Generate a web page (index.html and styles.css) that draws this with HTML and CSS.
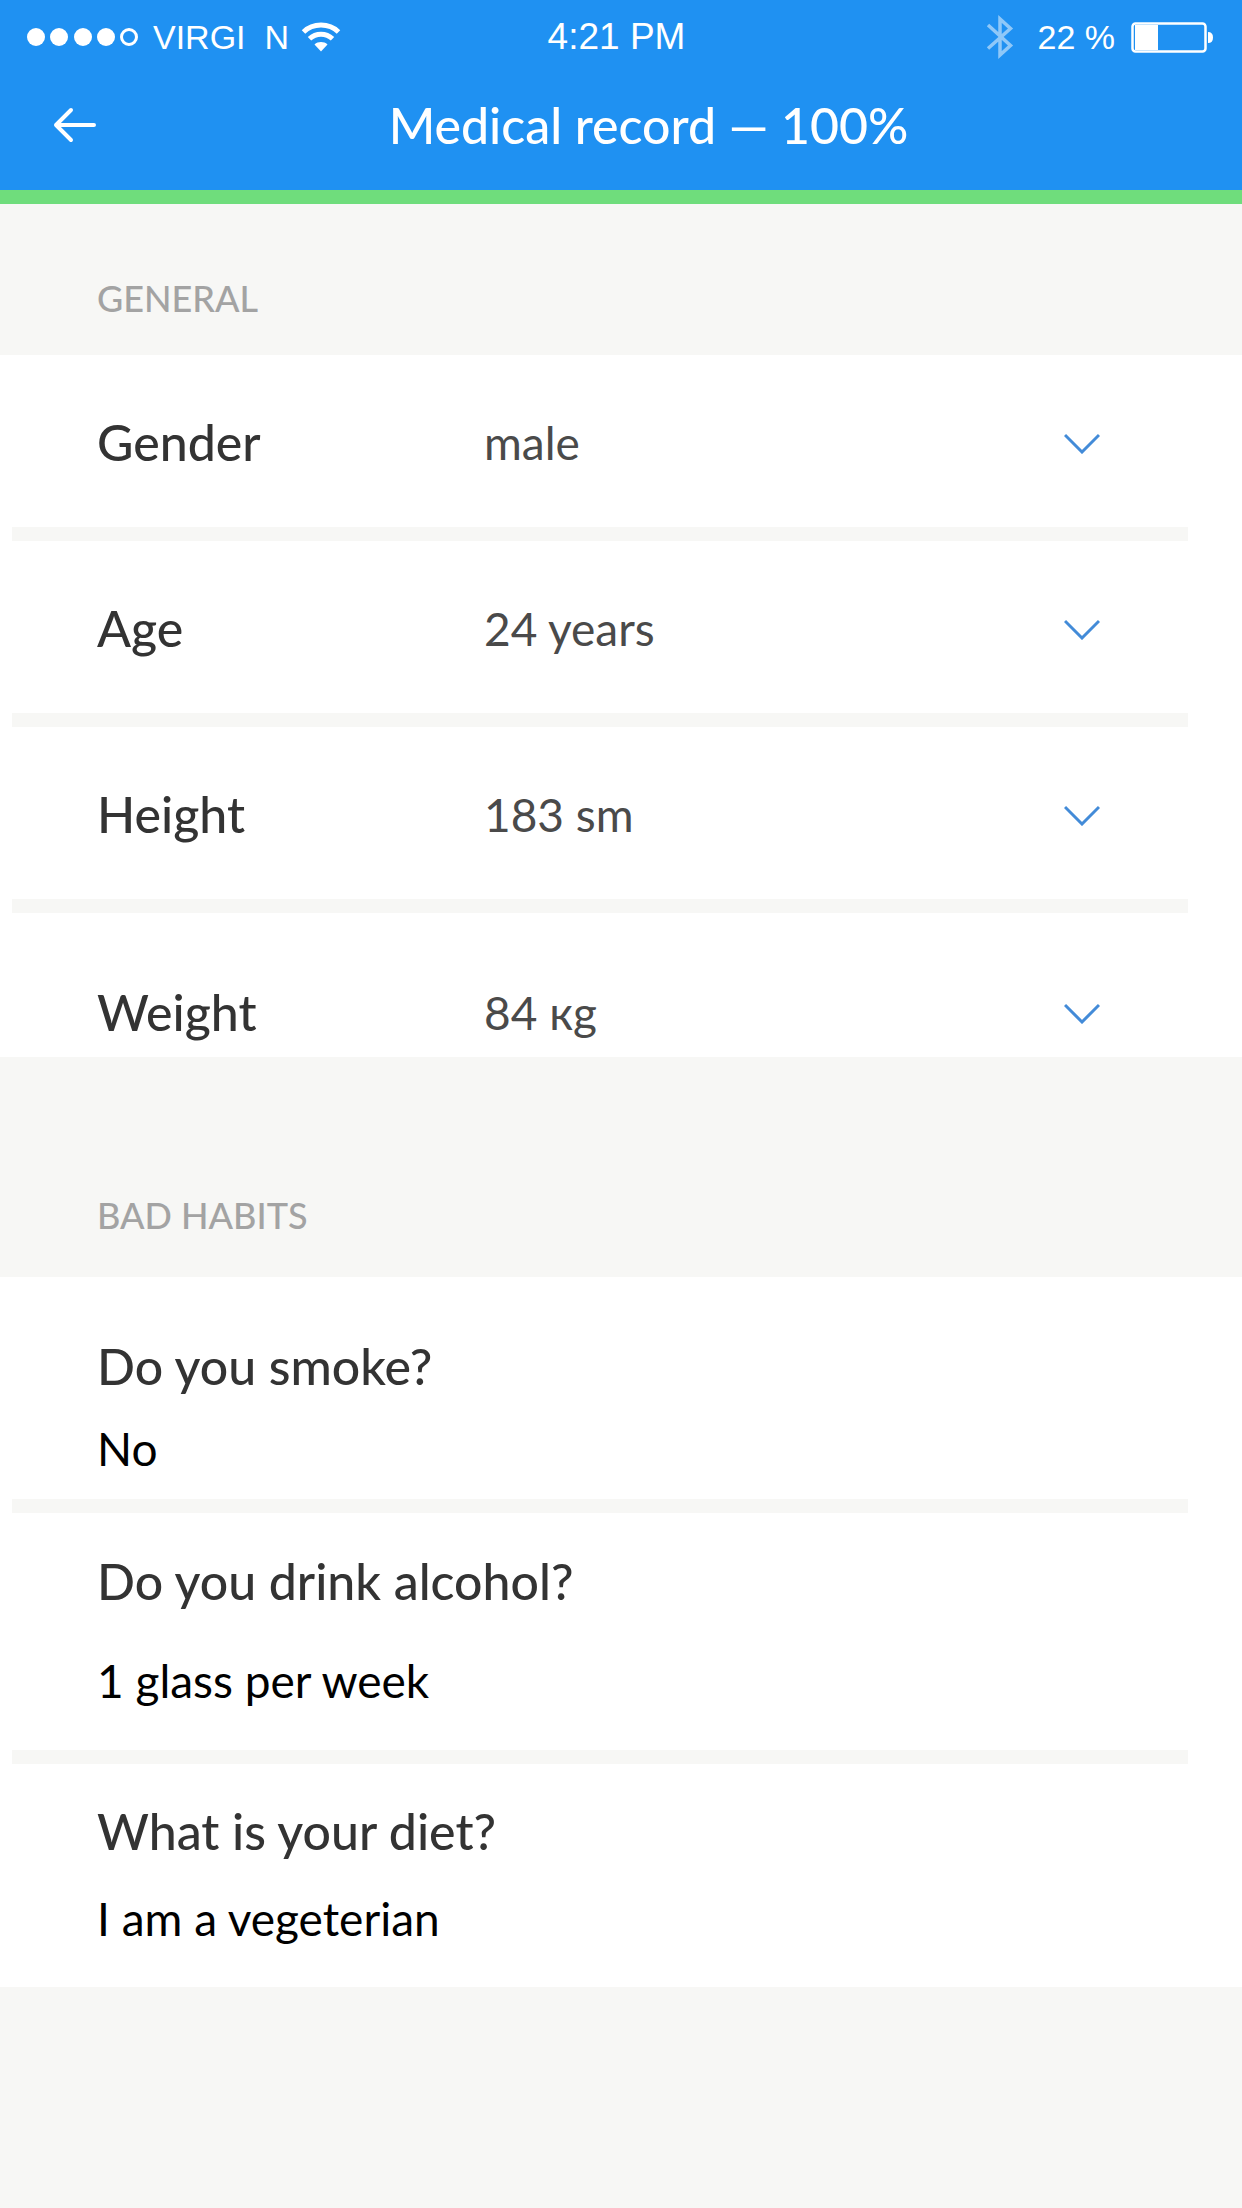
FILE: index.html
```html
<!DOCTYPE html>
<html lang="en">
<head>
  <meta charset="UTF-8">
  <meta name="viewport" content="width=device-width, initial-scale=1.0">
  <title>Medical record</title>
  <link rel="stylesheet" href="styles.css">
</head>
<body>
  <header class="header">
    <!-- Status Bar -->
    <div class="status-bar">
      <div class="status-left">
        <svg class="signal" width="112" height="18" viewBox="0 0 112 18">
          <g fill="#fff">
            <circle cx="9" cy="9" r="9"/>
            <circle cx="32" cy="9" r="9"/>
            <circle cx="56" cy="9" r="9"/>
            <circle cx="79" cy="9" r="9"/>
          </g>
          <circle cx="102" cy="9" r="7.500" fill="none" stroke="#fff" stroke-width="3"/>
        </svg>
        <span class="carrier">VIRGI&nbsp; N</span>
        <svg class="wifi" width="40" height="30" viewBox="0 0 40 30">
          <g fill="none" stroke="#fff" stroke-width="5">
            <path d="M2.500 10 C12 0.800 28 0.800 37.500 10"/>
            <path d="M8.500 16.700 C15 10.600 25 10.600 31.500 16.700"/>
          </g>
          <path d="M13.500 22.500 C17 19.300 23 19.300 26.500 22.500 L20 29.500 Z" fill="#fff"/>
        </svg>
      </div>
      <span class="time">4:21 PM</span>
      <div class="status-right">
        <svg class="bluetooth" width="28" height="44" viewBox="0 0 28 44">
          <path d="M2 10 L24.500 30.500 L14 40 V4 L24.500 13.500 L2 33.500" fill="none" stroke="#fff" stroke-width="3.500"/>
        </svg>
        <span class="percent">22 %</span>
        <svg class="battery" width="83" height="31" viewBox="0 0 83 31">
          <rect x="1.500" y="1.500" width="73" height="28" rx="3" fill="none" stroke="#fff" stroke-width="2.500"/>
          <rect x="4" y="3" width="23" height="25" fill="#fff"/>
          <path d="M77 10 Q82 10 82 15.500 Q82 21 77 21 Z" fill="#fff"/>
        </svg>
      </div>
    </div>

    <div class="nav-bar">
      <button class="back-button" aria-label="Back">
        <svg width="44" height="36" viewBox="0 0 44 36">
          <path d="M18 3 L3 18 L18 33 M3 18 H41" fill="none" stroke="#fff" stroke-width="4" stroke-linecap="round" stroke-linejoin="round"/>
        </svg>
      </button>
      <h1>Medical record — 100%</h1>
    </div>
  </header>

  <main>
    <h2 class="section-title">General</h2>
    <form class="card">
      <div class="row">
        <label for="gender">Gender</label>
        <select id="gender">
          <option>male</option>
          <option>female</option>
        </select>
        <svg class="chevron" width="36" height="24" viewBox="0 0 36 24"><path d="M1 5 L18 22 L35 5"/></svg>
      </div>
      <div class="row">
        <label for="age">Age</label>
        <select id="age">
          <option>24 years</option>
          <option>25 years</option>
        </select>
        <svg class="chevron" width="36" height="24" viewBox="0 0 36 24"><path d="M1 5 L18 22 L35 5"/></svg>
      </div>
      <div class="row">
        <label for="height">Height</label>
        <select id="height">
          <option>183 sm</option>
          <option>184 sm</option>
        </select>
        <svg class="chevron" width="36" height="24" viewBox="0 0 36 24"><path d="M1 5 L18 22 L35 5"/></svg>
      </div>
      <div class="row row-last">
        <label for="weight">Weight</label>
        <select id="weight">
          <option>84 кg</option>
          <option>85 кg</option>
        </select>
        <svg class="chevron" width="36" height="24" viewBox="0 0 36 24"><path d="M1 5 L18 22 L35 5"/></svg>
      </div>
    </form>

    <h2 class="section-title section-habits">Bad habits</h2>
    <div class="card">
      <div class="question smoke">
        <h3>Do you smoke?</h3>
        <p>No</p>
      </div>
      <div class="question alcohol">
        <h3>Do you drink alcohol?</h3>
        <p>1 glass per week</p>
      </div>
      <div class="question diet">
        <h3>What is your diet?</h3>
        <p>I am a vegeterian</p>
      </div>
    </div>
  </main>
</body>
</html>
```
FILE: styles.css
```css
* {
  box-sizing: border-box;
}

body {
  font-family: Lato, 'Noto Sans', sans-serif;
  margin: 0;
  background-color: #f7f7f5;
  color: #333;
}

h1, h2, h3, p {
  margin: 0;
  font-weight: 500;
}

.header {
  background-color: #1f91f2;
  border-bottom: 14px solid #6fdd7c;
  color: #fff;
}

.status-bar {
  display: grid;
  grid-template-columns: 1fr auto 1fr;
  align-items: center;
  height: 74px;
  padding: 0 28px 0 27px;
  font-family: 'Liberation Sans', sans-serif;
  font-size: 34px;
}

.status-left,
.status-right {
  display: flex;
  align-items: center;
}

.status-right {
  justify-content: flex-end;
}

.carrier {
  margin: 0 12px 0 14px;
}

.time {
  padding-right: 8px;
  font-size: 37px;
}

.bluetooth {
  opacity: 0.5;
}

.percent {
  margin: 0 16px 0 24px;
}

.nav-bar {
  display: flex;
  align-items: center;
  height: 116px;
  padding: 0 42px 14px 53px;
}

.nav-bar h1 {
  flex: 1;
  text-align: center;
  font-size: 50px;
  line-height: 60px;
}

.back-button {
  display: flex;
  padding: 0;
  border: none;
  background: none;
  cursor: pointer;
}

.section-title {
  padding: 64px 97px 27px;
  font-size: 36px;
  line-height: 60px;
  color: #a3a3a3;
  text-transform: uppercase;
}

.section-habits {
  padding-top: 128px;
  padding-bottom: 32px;
}

.card {
  background-color: #fff;
}

/* Rows and questions are split by an inset gray strip */
.row,
.question {
  margin: 0 54px 0 12px;
  padding-left: 85px;
  border-bottom: 14px solid #f7f7f5;
}

.row {
  display: flex;
  align-items: center;
  padding-top: 57px;
  padding-right: 88px;
  padding-bottom: 55px;
}

.row-last {
  padding-top: 69px;
  padding-bottom: 15px;
  border-bottom: none;
}

.row label {
  width: 387px;
  font-size: 50px;
  line-height: 60px;
  font-weight: 500;
}

.row select {
  flex: 1;
  min-width: 0;
  height: 60px;
  margin: 0;
  padding: 0;
  border: none;
  appearance: none;
  background: none;
  font-family: inherit;
  font-size: 46px;
  font-weight: 400;
  color: #4a4a4a;
}

.chevron {
  fill: none;
  stroke: #438bd8;
  stroke-width: 3px;
}

.question h3 {
  font-size: 50px;
  line-height: 60px;
}

.question p {
  font-size: 46px;
  line-height: 60px;
  font-weight: 400;
  color: #000;
}

.smoke {
  padding-top: 59px;
  padding-bottom: 20px;
}

.smoke h3 {
  margin-bottom: 23px;
}

.alcohol {
  padding-top: 38px;
  padding-bottom: 39px;
}

.alcohol h3 {
  margin-bottom: 40px;
}

.diet {
  padding-top: 37px;
  padding-bottom: 38px;
  border-bottom: none;
}

.diet h3 {
  margin-bottom: 28px;
}
```
